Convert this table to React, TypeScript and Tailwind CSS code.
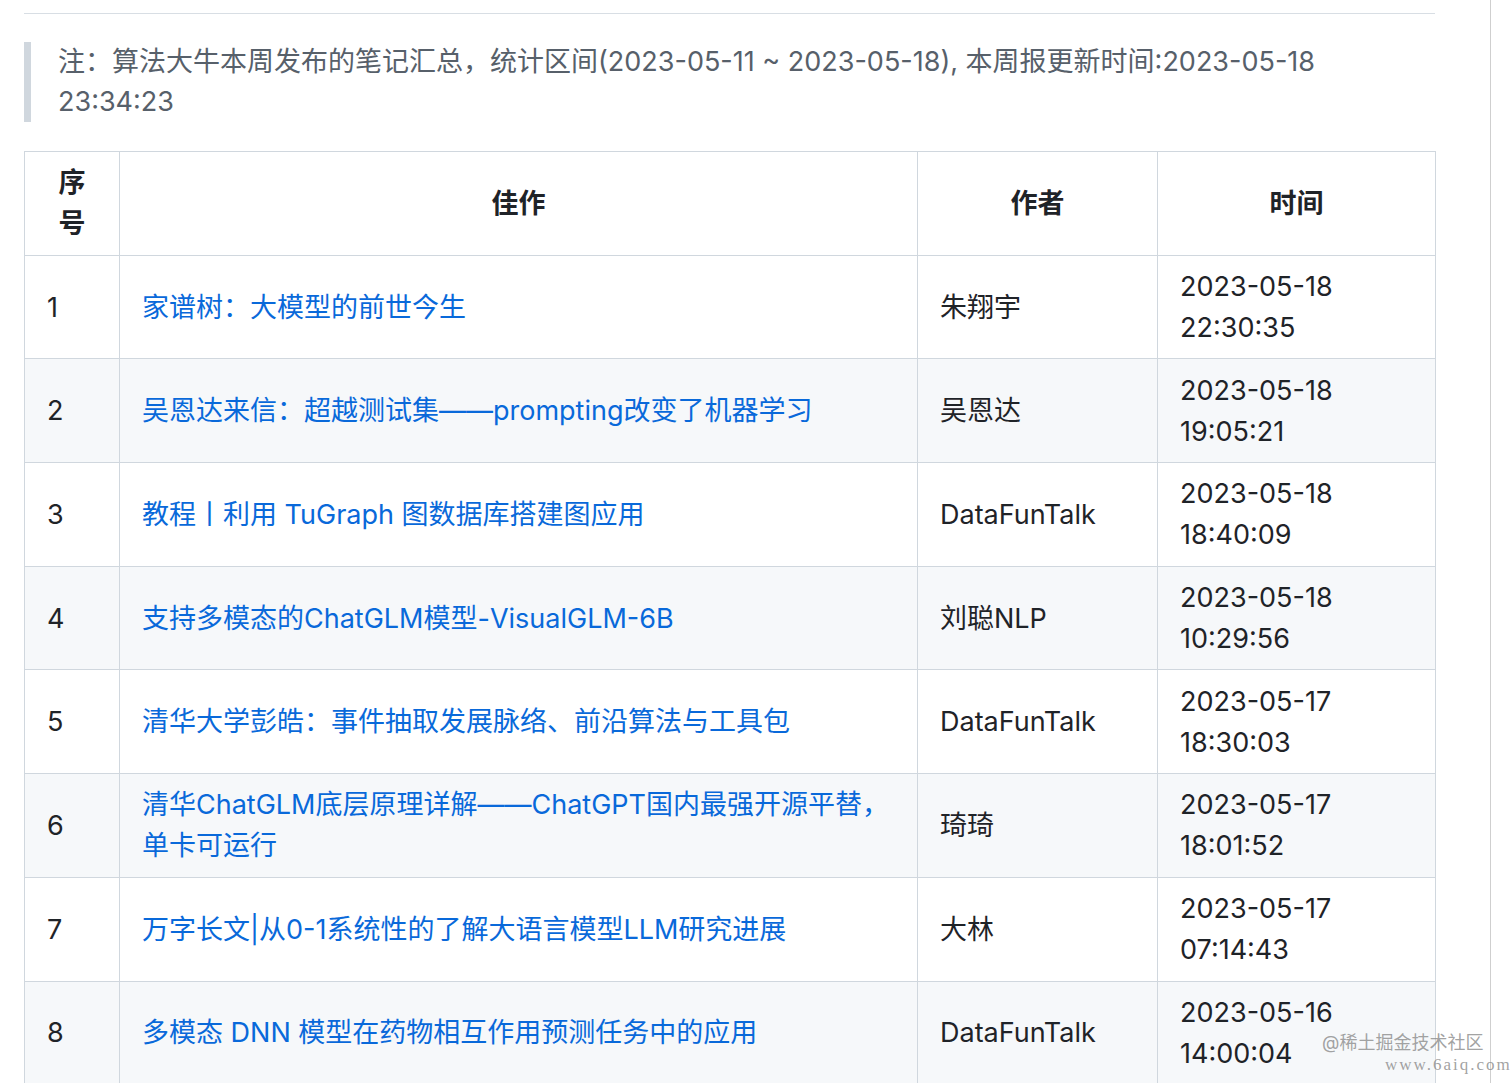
import React from "react";

type Row = {
  no: number;
  title: React.ReactNode;
  author: string;
  time: string;
};

const rows: Row[] = [
  { no: 1, title: "家谱树：大模型的前世今生", author: "朱翔宇", time: "2023-05-18 22:30:35" },
  { no: 2, title: "吴恩达来信：超越测试集——prompting改变了机器学习", author: "吴恩达", time: "2023-05-18 19:05:21" },
  { no: 3, title: "教程丨利用 TuGraph 图数据库搭建图应用", author: "DataFunTalk", time: "2023-05-18 18:40:09" },
  { no: 4, title: "支持多模态的ChatGLM模型-VisualGLM-6B", author: "刘聪NLP", time: "2023-05-18 10:29:56" },
  { no: 5, title: "清华大学彭皓：事件抽取发展脉络、前沿算法与工具包", author: "DataFunTalk", time: "2023-05-17 18:30:03" },
  {
    no: 6,
    title: (
      <>
        清华ChatGLM底层原理详解——ChatGPT国内最强开源平替，
        <br />
        单卡可运行
      </>
    ),
    author: "琦琦",
    time: "2023-05-17 18:01:52",
  },
  { no: 7, title: "万字长文|从0-1系统性的了解大语言模型LLM研究进展", author: "大林", time: "2023-05-17 07:14:43" },
  { no: 8, title: "多模态 DNN 模型在药物相互作用预测任务中的应用", author: "DataFunTalk", time: "2023-05-16 14:00:04" },
];

const cell = "border border-[#d0d7de] px-[22px] py-[10.35px] align-middle";

export default function App() {
  return (
    <div
      className="relative h-[1083px] w-[1512px] overflow-hidden bg-white text-[27px] leading-[41px] text-[#1f2328]"
      style={{ fontFamily: "Inter, 'Noto Sans CJK SC', sans-serif" }}
    >
      {/* 右侧分隔线 */}
      <div className="absolute top-0 bottom-0 left-[1490px] w-[1px] bg-[#cfcfcf]" />

      <div className="w-[1411px] ml-[24px]">
        <hr className="mt-[13px] border-0 h-[1px] bg-[#d8dee4]" />

        <blockquote className="mt-[28px] border-l-[7px] border-[#d0d7de] pl-[27px] pr-[26px] leading-[40px] text-[#57606a]">
          注：算法大牛本周发布的笔记汇总，统计区间(2023-05-11 ~ 2023-05-18), 本周报更新时间:2023-05-18
          <br />
          23:34:23
        </blockquote>

        <table className="mt-[29px] w-full table-fixed border-collapse">
          <colgroup>
            <col className="w-[95px]" />
            <col className="w-[798px]" />
            <col className="w-[240px]" />
            <col className="w-[278px]" />
          </colgroup>
          <thead>
            <tr>
              <th className={`${cell} font-bold text-center`}>序号</th>
              <th className={`${cell} font-bold text-center`}>佳作</th>
              <th className={`${cell} font-bold text-center`}>作者</th>
              <th className={`${cell} font-bold text-center`}>时间</th>
            </tr>
          </thead>
          <tbody>
            {rows.map((r) => (
              <tr key={r.no} className={r.no % 2 === 0 ? "bg-[#f6f8fa]" : "bg-white"}>
                <td className={cell}>{r.no}</td>
                <td className={cell}>
                  <a href="#" className="text-[#0969da]">
                    {r.title}
                  </a>
                </td>
                <td className={cell}>{r.author}</td>
                <td className={cell}>{r.time}</td>
              </tr>
            ))}
          </tbody>
        </table>
      </div>

      {/* 水印 */}
      <div className="absolute left-[1322px] top-[1031px] text-[18px] leading-[24px] text-[#8a8a8a]/80">
        @稀土掘金技术社区
      </div>
      <div
        className="absolute left-[1385px] top-[1054px] text-[17px] leading-[22px] tracking-[2px] text-[#8a8a8a]/80"
        style={{ fontFamily: "'Liberation Serif', serif" }}
      >
        www.6aiq.com
      </div>
    </div>
  );
}
